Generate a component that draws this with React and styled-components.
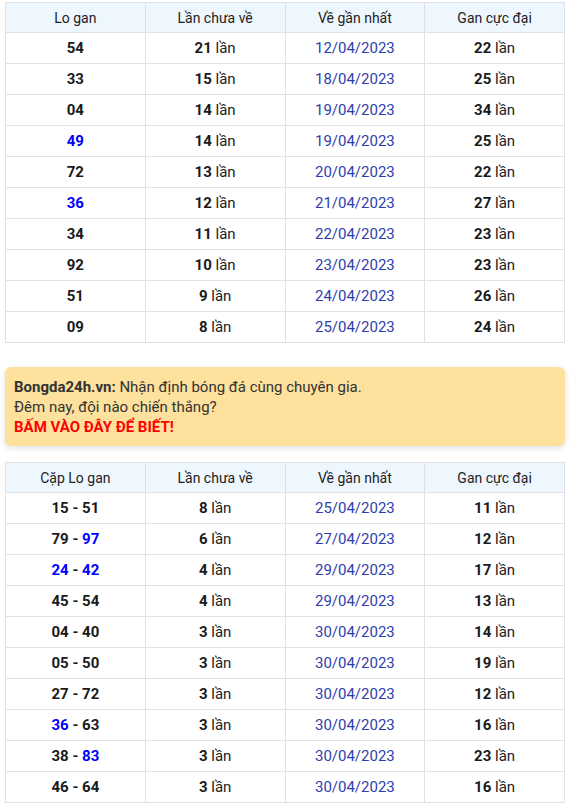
import React from "react";
import styled, { createGlobalStyle } from "styled-components";

const Global = createGlobalStyle`
  html, body { margin: 0; padding: 0; background: #fff; }
  body { font-family: Roboto, "Noto Sans", Arial, sans-serif; font-size: 14px; color: #212121; }
`;

const Page = styled.div`
  padding: 2px 4px 0 5px;
  display: flex;
  flex-direction: column;
`;

const Table = styled.table`
  width: 100%;
  border-collapse: collapse;
  table-layout: fixed;
  font-size: 15px;
`;

const Th = styled.th`
  background: #eef6fe;
  border: 1px solid #dee2e6;
  height: 29px;
  padding: 0;
  font-size: 14px;
  font-weight: 400;
  color: #222;
  text-align: center;
`;

const Td = styled.td`
  border: 1px solid #dee2e6;
  height: 30px;
  padding: 0;
  text-align: center;
  color: #222;
`;

const Num = styled.b`
  font-weight: 700;
  color: ${(p) => (p.$blue ? "#0000ff" : "#1a1a1a")};
`;

const DateText = styled.span`
  color: #2f3ead;
`;

const Ad = styled.div`
  margin: 24px 0 16px;
  background: #fde19d;
  border-radius: 6px;
  box-shadow: 0 2px 6px rgba(0, 0, 0, 0.12);
  padding: 10px 9px 9px;
  line-height: 20px;
  font-size: 15px;
  color: #333;
`;

const Red = styled.div`
  color: #f00;
  font-weight: 700;
`;

const t1 = [
  ["54", false, 21, "12/04/2023", 22],
  ["33", false, 15, "18/04/2023", 25],
  ["04", false, 14, "19/04/2023", 34],
  ["49", true, 14, "19/04/2023", 25],
  ["72", false, 13, "20/04/2023", 22],
  ["36", true, 12, "21/04/2023", 27],
  ["34", false, 11, "22/04/2023", 23],
  ["92", false, 10, "23/04/2023", 23],
  ["51", false, 9, "24/04/2023", 26],
  ["09", false, 8, "25/04/2023", 24],
];

const t2 = [
  ["15", false, "51", false, 8, "25/04/2023", 11],
  ["79", false, "97", true, 6, "27/04/2023", 12],
  ["24", true, "42", true, 4, "29/04/2023", 17],
  ["45", false, "54", false, 4, "29/04/2023", 13],
  ["04", false, "40", false, 3, "30/04/2023", 14],
  ["05", false, "50", false, 3, "30/04/2023", 19],
  ["27", false, "72", false, 3, "30/04/2023", 12],
  ["36", true, "63", false, 3, "30/04/2023", 16],
  ["38", false, "83", true, 3, "30/04/2023", 23],
  ["46", false, "64", false, 3, "30/04/2023", 16],
];

const Head = ({ first }) => (
  <thead>
    <tr>
      <Th>{first}</Th>
      <Th>Lần chưa về</Th>
      <Th>Về gần nhất</Th>
      <Th>Gan cực đại</Th>
    </tr>
  </thead>
);

export default function App() {
  return (
    <>
      <Global />
      <Page>
        <Table>
          <Head first="Lo gan" />
          <tbody>
            {t1.map(([n, blue, c, d, g]) => (
              <tr key={n}>
                <Td><Num $blue={blue}>{n}</Num></Td>
                <Td><Num>{c}</Num> lần</Td>
                <Td><DateText>{d}</DateText></Td>
                <Td><Num>{g}</Num> lần</Td>
              </tr>
            ))}
          </tbody>
        </Table>
        <Ad>
          <div><b>Bongda24h.vn:</b> Nhận định bóng đá cùng chuyên gia.</div>
          <div>Đêm nay, đội nào chiến thắng?</div>
          <Red>BẤM VÀO ĐÂY ĐỂ BIẾT!</Red>
        </Ad>
        <Table>
          <Head first="Cặp Lo gan" />
          <tbody>
            {t2.map(([a, ab, b, bb, c, d, g]) => (
              <tr key={a + b}>
                <Td>
                  <Num $blue={ab}>{a}</Num> <Num>-</Num> <Num $blue={bb}>{b}</Num>
                </Td>
                <Td><Num>{c}</Num> lần</Td>
                <Td><DateText>{d}</DateText></Td>
                <Td><Num>{g}</Num> lần</Td>
              </tr>
            ))}
          </tbody>
        </Table>
      </Page>
    </>
  );
}
